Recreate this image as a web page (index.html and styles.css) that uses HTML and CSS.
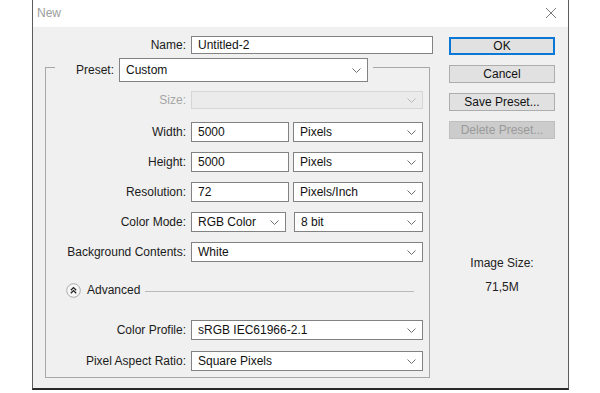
FILE: index.html
```html
<!DOCTYPE html>
<html lang="en">
<head>
  <meta charset="UTF-8" />
  <meta name="viewport" content="width=device-width, initial-scale=1.0" />
  <title>New</title>
  <link rel="stylesheet" href="styles.css">
</head>
<body>

  <div class="dialog">

    <!-- Title Bar -->
    <div class="titlebar">
      <span class="title">New</span>
      <svg class="close" width="12" height="12" viewBox="0 0 12 12">
        <path d="M1 1L11 11M11 1L1 11" stroke="#7a7a7a" stroke-width="1" fill="none" />
      </svg>
    </div>

    <div class="content">

      <!-- Form Column -->
      <div class="main">
        <div class="row row-name">
          <label class="lbl lbl-name">Name:</label>
          <input class="field field-name" type="text" value="Untitled-2" />
        </div>

        <fieldset class="group">
          <legend class="preset">
            <label class="lbl lbl-preset">Preset:</label>
            <div class="select select-preset">
              <span>Custom</span>
              <svg class="chev" width="9" height="5" viewBox="0 0 9 5"><path d="M0.5 0.5L4.5 4.5L8.5 0.5" /></svg>
            </div>
          </legend>

          <div class="row row-size">
            <label class="lbl lbl-disabled">Size:</label>
            <div class="select select-disabled">
              <span></span>
              <svg class="chev" width="9" height="5" viewBox="0 0 9 5"><path d="M0.5 0.5L4.5 4.5L8.5 0.5" /></svg>
            </div>
          </div>

          <div class="row row-first">
            <label class="lbl">Width:</label>
            <input class="field field-num" type="text" value="5000" />
            <div class="select select-unit">
              <span>Pixels</span>
              <svg class="chev" width="9" height="5" viewBox="0 0 9 5"><path d="M0.5 0.5L4.5 4.5L8.5 0.5" /></svg>
            </div>
          </div>

          <div class="row">
            <label class="lbl">Height:</label>
            <input class="field field-num" type="text" value="5000" />
            <div class="select select-unit">
              <span>Pixels</span>
              <svg class="chev" width="9" height="5" viewBox="0 0 9 5"><path d="M0.5 0.5L4.5 4.5L8.5 0.5" /></svg>
            </div>
          </div>

          <div class="row">
            <label class="lbl">Resolution:</label>
            <input class="field field-num" type="text" value="72" />
            <div class="select select-unit">
              <span>Pixels/Inch</span>
              <svg class="chev" width="9" height="5" viewBox="0 0 9 5"><path d="M0.5 0.5L4.5 4.5L8.5 0.5" /></svg>
            </div>
          </div>

          <div class="row">
            <label class="lbl">Color Mode:</label>
            <div class="select select-mode">
              <span>RGB Color</span>
              <svg class="chev" width="9" height="5" viewBox="0 0 9 5"><path d="M0.5 0.5L4.5 4.5L8.5 0.5" /></svg>
            </div>
            <div class="select select-bits">
              <span>8 bit</span>
              <svg class="chev" width="9" height="5" viewBox="0 0 9 5"><path d="M0.5 0.5L4.5 4.5L8.5 0.5" /></svg>
            </div>
          </div>

          <div class="row">
            <label class="lbl">Background Contents:</label>
            <div class="select select-wide">
              <span>White</span>
              <svg class="chev" width="9" height="5" viewBox="0 0 9 5"><path d="M0.5 0.5L4.5 4.5L8.5 0.5" /></svg>
            </div>
          </div>

          <!-- Advanced Section -->
          <div class="advanced">
            <svg class="adv-icon" width="15" height="15" viewBox="0 0 15 15">
              <circle cx="7.5" cy="7.5" r="6.8" fill="#f7f7f7" stroke="#ababab" stroke-width="1" />
              <path d="M4.8 7.2L7.5 4.6L10.2 7.2M4.8 10.2L7.5 7.6L10.2 10.2" fill="none" stroke="#222" stroke-width="1.3" />
            </svg>
            <span class="adv-text">Advanced</span>
            <span class="adv-line"></span>
          </div>

          <div class="row row-profile">
            <label class="lbl">Color Profile:</label>
            <div class="select select-wide">
              <span>sRGB IEC61966-2.1</span>
              <svg class="chev" width="9" height="5" viewBox="0 0 9 5"><path d="M0.5 0.5L4.5 4.5L8.5 0.5" /></svg>
            </div>
          </div>

          <div class="row row-aspect">
            <label class="lbl">Pixel Aspect Ratio:</label>
            <div class="select select-wide">
              <span>Square Pixels</span>
              <svg class="chev" width="9" height="5" viewBox="0 0 9 5"><path d="M0.5 0.5L4.5 4.5L8.5 0.5" /></svg>
            </div>
          </div>
        </fieldset>
      </div>

      <!-- Button Column -->
      <div class="side">
        <button class="btn btn-ok">OK</button>
        <button class="btn">Cancel</button>
        <button class="btn">Save Preset...</button>
        <button class="btn btn-disabled">Delete Preset...</button>

        <div class="image-size">Image Size:</div>
        <div class="image-value">71,5M</div>
      </div>

    </div>
  </div>

</body>
</html>
```

FILE: styles.css
```css
body {
  margin: 0;
  padding: 0;
  background: #ffffff;
  font-family: "Liberation Sans", Arial, sans-serif;
  font-size: 12px;
  color: #1b1b1b;
}

.dialog {
  margin-left: 32px;
  width: 537px;
  box-sizing: border-box;
  border-left: 1px solid #5c5c5c;
  border-right: 1px solid #5c5c5c;
  border-bottom: 2px solid #2a2a2a;
}

.titlebar {
  height: 27px;
  background: #ffffff;
  display: flex;
  align-items: center;
  justify-content: space-between;
  padding: 0 11px 2px 4px;
  box-sizing: border-box;
}

.title {
  color: #9c9c9c;
}

.content {
  height: 361px;
  background: #f0f0f0;
  display: flex;
  box-sizing: border-box;
}

/* Form column */

.main {
  width: 388px;
  padding: 9px 0 0 12px;
}

.row {
  display: flex;
  align-items: center;
  gap: 5px;
  height: 20px;
  margin-top: 10px;
}

.row-name {
  height: 18px;
  margin-top: 0;
}

.lbl {
  width: 131px;
  text-align: right;
  white-space: nowrap;
}

.lbl-name {
  width: 141px;
}

.lbl-preset {
  width: 54px;
}

.lbl-disabled {
  color: #a6a6a6;
}

.field,
.select {
  height: 100%;
  box-sizing: border-box;
  background: #ffffff;
  border: 1px solid #828282;
  font-family: "Liberation Sans", Arial, sans-serif;
  font-size: 12px;
  color: #111;
  padding: 0 0 0 6px;
  margin: 0;
  outline: none;
}

.field-name {
  width: 242px;
}

.field-num {
  width: 98px;
}

.select {
  display: flex;
  align-items: center;
  justify-content: space-between;
  padding-right: 6px;
}

.chev path {
  fill: none;
  stroke: #6e6e6e;
  stroke-width: 1;
}

.select-preset {
  width: 249px;
  height: 24px;
}

.select-disabled {
  width: 232px;
  background: #ebebeb;
  border-color: #d6d6d6;
}

.select-disabled .chev path {
  stroke: #b8b8b8;
}

.select-unit {
  width: 130px;
  margin-left: -1px;
}

.select-mode {
  width: 95px;
}

.select-bits {
  width: 129px;
  margin-left: 3px;
}

.select-wide {
  width: 232px;
}

/* Group box */

.group {
  width: 385px;
  box-sizing: border-box;
  margin: -2px 0 0 0;
  padding: 0 5px 6px 9px;
  border: 1px solid #a7a7a7;
}

.preset {
  display: flex;
  align-items: center;
  gap: 5px;
  padding: 6px 5px 0 5px;
}

.row-size {
  height: 18px;
  margin-top: 9px;
}

.row-first {
  margin-top: 13px;
}

.advanced {
  display: flex;
  align-items: center;
  height: 20px;
  margin: 18px 10px 0 11px;
}

.adv-icon {
  display: block;
}

.adv-text {
  margin-left: 6px;
}

.adv-line {
  flex: 1;
  height: 1px;
  background: #b9b9b9;
  margin-left: 5px;
  margin-top: 2px;
}

.row-profile {
  margin-top: 20px;
}

.row-aspect {
  margin-top: 11px;
}

/* Button column */

.side {
  width: 106px;
  margin-left: 16px;
  padding-top: 10px;
  display: flex;
  flex-direction: column;
}

.btn {
  height: 18px;
  margin: 0 0 10px 0;
  padding: 0;
  background: #e1e1e1;
  border: 1px solid #adadad;
  font-family: "Liberation Sans", Arial, sans-serif;
  font-size: 12px;
  color: #111;
}

.btn-ok {
  border: 2px solid #0a78d4;
}

.btn-disabled {
  background: #cccccc;
  border-color: #bfbfbf;
  color: #9a9a9a;
}

.image-size,
.image-value {
  text-align: center;
  line-height: 14px;
  color: #222;
}

.image-size {
  margin-top: 107px;
}

.image-value {
  margin-top: 10px;
}
```
